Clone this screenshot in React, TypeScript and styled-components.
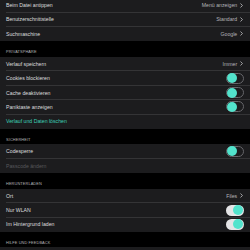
import React from "react";
import styled, { createGlobalStyle } from "styled-components";

const Global = createGlobalStyle`
  html, body { margin: 0; padding: 0; background: #000; }
  body { font-family: "Liberation Sans", Arial, sans-serif; overflow: hidden; }
`;

const Page = styled.div`
  width: 250px;
  height: 250px;
  overflow: hidden;
  background: #000;
`;

const Scroller = styled.div`
  margin-top: -2.2px;
  display: flex;
  flex-direction: column;
`;

const Group = styled.div`
  background: #1c1c1e;
  display: flex;
  flex-direction: column;
`;

const SectionHeader = styled.div`
  height: 15.6px;
  box-sizing: border-box;
  padding: 0 6px 2.5px;
  display: flex;
  align-items: flex-end;
  font-size: 3.9px;
  letter-spacing: 0.1px;
  color: #b0b0b4;
  text-transform: uppercase;
`;

const Row = styled.div<{ $last?: boolean }>`
  height: 14.4px;
  display: flex;
  align-items: center;
  justify-content: space-between;
  padding: 0 6px 0 6px;
  position: relative;
  &::after {
    content: "";
    display: ${(p) => (p.$last ? "none" : "block")};
    position: absolute;
    left: 6px;
    right: 0;
    bottom: 0;
    height: 0.5px;
    background: #343436;
  }
`;

const Label = styled.span<{ $tone?: "normal" | "link" | "disabled" }>`
  font-size: 5.2px;
  color: ${(p) =>
    p.$tone === "link" ? "#3dcfb6" : p.$tone === "disabled" ? "#58585c" : "#dcdcde"};
  white-space: nowrap;
`;

const Value = styled.span`
  display: flex;
  align-items: center;
  gap: 2.8px;
  margin-right: 1px;
  font-size: 5.2px;
  color: #b4b4b8;
  white-space: nowrap;
`;

const Chevron = () => (
  <svg width="3" height="5" viewBox="0 0 3 5">
    <path d="M0.5 0.5 L2.4 2.5 L0.5 4.5" fill="none" stroke="#c4c4c8" strokeWidth="0.8" />
  </svg>
);

const Track = styled.div<{ $on?: boolean }>`
  width: 18px;
  height: 11px;
  box-sizing: border-box;
  border-radius: 6px;
  background: ${(p) => (p.$on ? "#e4e4e6" : "#1c1c1e")};
  border: ${(p) => (p.$on ? "none" : "0.8px solid #66666a")};
  display: flex;
  align-items: center;
  justify-content: ${(p) => (p.$on ? "flex-end" : "flex-start")};
  padding: 0.5px;
  margin-right: 0.5px;
`;

const Knob = styled.div`
  width: 10px;
  height: 10px;
  border-radius: 50%;
  background: #52e3cc;
`;

const Toggle = ({ on }: { on?: boolean }) => (
  <Track $on={on}>
    <Knob />
  </Track>
);

export default function App() {
  return (
    <Page>
      <Global />
      <Scroller>
        <Group>
          <Row>
            <Label>Beim Datei antippen</Label>
            <Value>
              Menü anzeigen <Chevron />
            </Value>
          </Row>
          <Row>
            <Label>Benutzerschnittstelle</Label>
            <Value>
              Standard <Chevron />
            </Value>
          </Row>
          <Row $last>
            <Label>Suchmaschine</Label>
            <Value>
              Google <Chevron />
            </Value>
          </Row>
        </Group>
        <SectionHeader>Privatsphäre</SectionHeader>
        <Group>
          <Row>
            <Label>Verlauf speichern</Label>
            <Value>
              Immer <Chevron />
            </Value>
          </Row>
          <Row>
            <Label>Cookies blockieren</Label>
            <Toggle />
          </Row>
          <Row>
            <Label>Cache deaktivieren</Label>
            <Toggle />
          </Row>
          <Row>
            <Label>Paniktaste anzeigen</Label>
            <Toggle />
          </Row>
          <Row $last>
            <Label $tone="link">Verlauf und Daten löschen</Label>
          </Row>
        </Group>
        <SectionHeader>Sicherheit</SectionHeader>
        <Group>
          <Row>
            <Label>Codesperre</Label>
            <Toggle />
          </Row>
          <Row $last>
            <Label $tone="disabled">Passcode ändern</Label>
          </Row>
        </Group>
        <SectionHeader>Herunterladen</SectionHeader>
        <Group>
          <Row>
            <Label>Ort</Label>
            <Value>
              Files <Chevron />
            </Value>
          </Row>
          <Row>
            <Label>Nur WLAN</Label>
            <Toggle on />
          </Row>
          <Row $last>
            <Label>Im Hintergrund laden</Label>
            <Toggle on />
          </Row>
        </Group>
        <SectionHeader>Hilfe und Feedback</SectionHeader>
        <Group>
          <Row>
            <Label>&nbsp;</Label>
          </Row>
        </Group>
      </Scroller>
    </Page>
  );
}
